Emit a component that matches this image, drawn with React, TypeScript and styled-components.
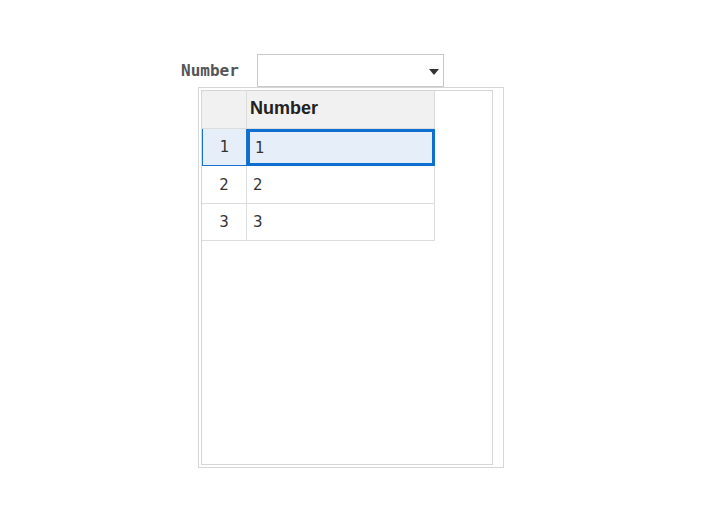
import React from "react";
import styled, { createGlobalStyle } from "styled-components";

const Global = createGlobalStyle`
  html, body { margin: 0; padding: 0; background: #fff; }
  body { font-family: "DejaVu Sans", sans-serif; }
`;

const Page = styled.div`
  display: flex;
  flex-direction: column;
  align-items: flex-start;
  padding: 54px 0 0 181px;
`;

const FieldRow = styled.div`
  display: flex;
  align-items: center;
  height: 33px;
`;

const Label = styled.label`
  width: 76px;
  font-family: "DejaVu Sans Mono", monospace;
  font-weight: bold;
  font-size: 16px;
  color: #555;
  line-height: 1;
  padding-top: 1px;
`;

const Select = styled.div`
  box-sizing: border-box;
  width: 187px;
  height: 33px;
  border: 1px solid #c9c9c9;
  background: #fff;
  display: flex;
  align-items: center;
  justify-content: flex-end;
  padding-right: 4px;
`;

const Caret = styled.div`
  width: 0;
  height: 0;
  border-left: 5px solid transparent;
  border-right: 5px solid transparent;
  border-top: 6px solid #333;
  margin-top: 3px;
`;

const Popup = styled.div`
  box-sizing: border-box;
  margin-left: 17px;
  width: 306px;
  height: 381px;
  border: 1px solid #d6d6d6;
  padding: 2px;
  background: #fff;
`;

const PopupInner = styled.div`
  box-sizing: border-box;
  height: 100%;
  width: 292px;
  border: 1px solid #d6d6d6;
`;

const Grid = styled.div`
  display: grid;
  grid-template-columns: 45px 188px;
`;

const HeadCell = styled.div`
  box-sizing: border-box;
  height: 38px;
  background: #f1f1f1;
  border-right: 1px solid #dcdcdc;
  border-bottom: 1px solid #dcdcdc;
  font-family: "Liberation Sans", Arial, sans-serif;
  font-weight: bold;
  font-size: 18px;
  color: #222;
  display: flex;
  align-items: center;
  padding-left: 3px;
  padding-bottom: 2px;
`;

const RowHead = styled.div<{ $sel?: boolean; $h: number }>`
  box-sizing: border-box;
  height: ${(p) => p.$h}px;
  background: ${(p) => (p.$sel ? "#e5eef9" : "#fff")};
  border-right: 1px solid ${(p) => (p.$sel ? "#1a72d1" : "#dcdcdc")};
  border-bottom: 1px solid ${(p) => (p.$sel ? "#1a72d1" : "#dcdcdc")};
  border-left: ${(p) => (p.$sel ? "1px solid #1a72d1" : "none")};
  display: flex;
  align-items: center;
  justify-content: center;
  font-size: 15px;
  color: #333;
`;

const Cell = styled.div<{ $sel?: boolean; $h: number }>`
  box-sizing: border-box;
  height: ${(p) => p.$h}px;
  background: ${(p) => (p.$sel ? "#e5eef9" : "#fff")};
  border: ${(p) => (p.$sel ? "3px solid #0f6fd0" : "none")};
  border-right: ${(p) => (p.$sel ? "3px solid #0f6fd0" : "1px solid #dcdcdc")};
  border-bottom: ${(p) => (p.$sel ? "3px solid #0f6fd0" : "1px solid #dcdcdc")};
  display: flex;
  align-items: center;
  padding-left: ${(p) => (p.$sel ? 5 : 6)}px;
  font-size: 15px;
  color: #333;
`;

const rows = [
  { n: "1", sel: true, h: 37 },
  { n: "2", sel: false, h: 38 },
  { n: "3", sel: false, h: 37 },
];

export default function App() {
  return (
    <>
      <Global />
      <Page>
        <FieldRow>
          <Label>Number</Label>
          <Select>
            <Caret />
          </Select>
        </FieldRow>
        <Popup>
          <PopupInner>
            <Grid>
              <HeadCell />
              <HeadCell>Number</HeadCell>
              {rows.map((r) => (
                <React.Fragment key={r.n}>
                  <RowHead $sel={r.sel} $h={r.h}>{r.n}</RowHead>
                  <Cell $sel={r.sel} $h={r.h}>{r.n}</Cell>
                </React.Fragment>
              ))}
            </Grid>
          </PopupInner>
        </Popup>
      </Page>
    </>
  );
}
